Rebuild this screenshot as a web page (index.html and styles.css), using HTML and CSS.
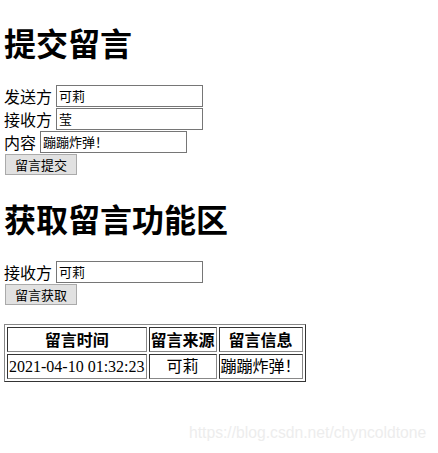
FILE: index.html
```html
<!DOCTYPE html>
<html lang="zh">
<head>
<meta charset="utf-8">
<title>留言</title>
<link rel="stylesheet" href="styles.css">
</head>
<body>
<h1 class="title">提交留言</h1>
<form class="form">
  <div class="row">发送方 <input class="field" type="text" value="可莉"></div>
  <div class="row">接收方 <input class="field" type="text" value="莹"></div>
  <div class="row">内容 <input class="field" type="text" value="蹦蹦炸弹！"></div>
  <div class="row"><button class="btn" type="button">留言提交</button></div>
</form>
<h1 class="title">获取留言功能区</h1>
<form class="form">
  <div class="row">接收方 <input class="field" type="text" value="可莉"></div>
  <div class="row"><button class="btn" type="button">留言获取</button></div>
</form>
<table class="msgs" border="1">
  <tr><th>留言时间</th><th>留言来源</th><th>留言信息</th></tr>
  <tr><td>2021-04-10 01:32:23</td><td class="center">可莉</td><td>蹦蹦炸弹！</td></tr>
</table>
<div class="watermark">https://blog.csdn.net/chyncoldtone</div>
</body>
</html>
```
FILE: styles.css
```css
html, body {
  background: #fff;
}
body {
  margin: 0 4px;
  font-family: "Liberation Serif", "Noto Sans CJK SC", serif;
  font-size: 16px;
  color: #000;
  position: relative;
  height: 453px;
}
.title {
  font-family: "Liberation Sans", "Noto Sans CJK SC", sans-serif;
  font-size: 32px;
  font-weight: bold;
  margin: 0;
  padding-top: 27px;
  padding-bottom: 20px;
  line-height: 37px;
}
.form {
  margin: 0;
}
.row {
  height: 23px;
  display: flex;
  align-items: center;
  font-family: "Noto Sans CJK SC", sans-serif;
}
.field {
  box-sizing: border-box;
  width: 147px;
  height: 22px;
  margin: 0 0 0 4px;
  padding: 1px 2px;
  border: 1px solid #767676;
  font-family: "Noto Sans CJK SC", sans-serif;
  font-size: 13px;
}
.btn {
  box-sizing: border-box;
  width: 72px;
  height: 21px;
  margin-left: 1px;
  padding: 0;
  border: 1px solid #aaa;
  background: #e1e1e1;
  font-family: "Noto Sans CJK SC", sans-serif;
  font-size: 13px;
}
.msgs {
  margin-top: 18px;
  border-color: #888;
}
.msgs th, .msgs td {
  padding: 1px;
  font-size: 16px;
  line-height: 21px;
}
.msgs th {
  font-family: "Noto Sans CJK SC", sans-serif;
}
.center {
  text-align: center;
}
.watermark {
  position: absolute;
  left: 185px;
  top: 424px;
  font-family: "Liberation Sans", sans-serif;
  font-size: 15.7px;
  color: #ededed;
}
```
